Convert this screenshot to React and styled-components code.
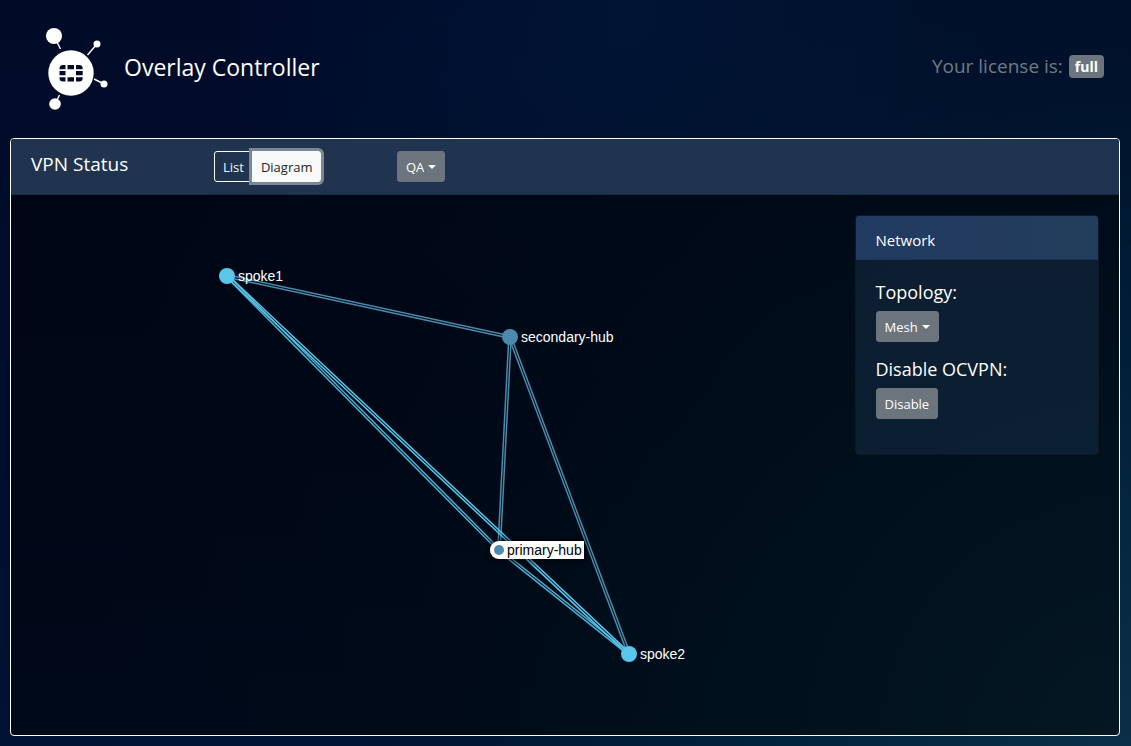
import React, { useState } from "react";
import styled, { createGlobalStyle } from "styled-components";

const GlobalStyle = createGlobalStyle`
  *, *::before, *::after { box-sizing: border-box; }
  body {
    margin: 0;
    color: #fff;
    font-family: "Segoe UI", "Open Sans", "Noto Sans", sans-serif;
    font-size: 15px;
    line-height: 24px;
    background: #000b26;
  }
`;

const Page = styled.div`
  min-height: 100vh;
  display: flex;
  flex-direction: column;
  padding: 0 11px 10px 10px;
  background:
    radial-gradient(circle at 100% 100%, rgba(14, 52, 76, 0.85) 0%, rgba(0, 40, 60, 0.7) 28%, rgba(0, 28, 48, 0.35) 50%, rgba(0, 30, 50, 0) 80%),
    radial-gradient(ellipse at 55% 0%, rgba(0, 20, 56, 0.8) 0%, rgba(0, 20, 56, 0) 45%),
    linear-gradient(180deg, #000b28 0%, #000e2e 60%, #001334 100%);
`;

const Header = styled.header`
  display: flex;
  align-items: center;
  height: 138px;
  padding: 0 16px 0 30px;
`;

const Logo = styled.svg`
  width: 75px;
  height: 92px;
  flex: none;
  margin: 0 9px 2px 0;
`;

const Brand = styled.h1`
  flex: 1;
  margin: 0 0 4px;
  font-size: 23px;
  font-weight: 400;
  line-height: 32px;
`;

const License = styled.p`
  display: flex;
  align-items: center;
  gap: 6px;
  margin: 0 0 6px;
  font-size: 19px;
  color: #727b84;
`;

const Badge = styled.span`
  padding: 0 6px;
  border-radius: 4px;
  background: #6c757d;
  color: #fff;
  font-size: 14px;
  font-weight: 700;
  line-height: 23px;
`;

const Card = styled.main`
  flex: 1;
  display: flex;
  flex-direction: column;
  border: 1px solid #fff;
  border-radius: 4px;
  background: rgba(0, 0, 0, 0.5);
  overflow: hidden;
`;

const Row = styled.div`
  display: grid;
  grid-template-columns: repeat(12, minmax(0, 1fr));
  column-gap: 30px;
  padding: 0 20px;
`;

const Toolbar = styled(Row)`
  height: 56px;
  align-items: center;
  background: #20334f;
  border-bottom: 1px solid #1a2a42;
`;

const Column = styled.div`
  grid-column: span ${(p) => p.$span};
`;

const Title = styled.h2`
  margin: 0 0 6px;
  font-size: 19px;
  font-weight: 400;
  line-height: 24px;
`;

const ButtonGroup = styled.div`
  display: flex;
`;

const ToggleButton = styled.button`
  height: 31px;
  padding: 0 8px;
  border: 1px solid #f8f9fa;
  border-radius: ${(p) => (p.$last ? "0 3px 3px 0" : "3px 0 0 3px")};
  margin-left: ${(p) => (p.$last ? "-1px" : "0")};
  background: ${(p) => (p.$active ? "#f8f9fa" : "transparent")};
  color: ${(p) => (p.$active ? "#212529" : "#f8f9fa")};
  box-shadow: ${(p) => (p.$active ? "0 0 0 3px #7c8794" : "none")};
  font: inherit;
  font-size: 13px;
`;

const Button = styled.button`
  height: 31px;
  padding: 0 8px;
  border: 1px solid #6c757d;
  border-radius: 3px;
  background: #6c757d;
  color: #fff;
  font: inherit;
  font-size: 13px;
`;

const SelectBox = styled.span`
  display: inline-grid;
  align-items: center;
  vertical-align: top;

  & > * { grid-area: 1 / 1; }
`;

const Select = styled(Button).attrs({ as: "select" })`
  appearance: none;
  field-sizing: content;
  padding-right: 20px;
`;

const Caret = styled.span`
  justify-self: end;
  margin-right: 9px;
  border: 4px solid transparent;
  border-top-color: #fff;
  border-bottom: 0;
  pointer-events: none;
`;

const Body = styled(Row)`
  flex: 1;
`;

const Diagram = styled.svg`
  display: block;
  width: 100%;
  height: 100%;
  min-height: 520px;
  overflow: visible;
  font-family: "Liberation Sans", Arial, sans-serif;
  font-size: 14px;
`;

const Panel = styled.section`
  margin: 20px 0;
  padding-bottom: 35px;
  border: 1px solid #0a1a2b;
  border-radius: 4px;
  background: rgba(32, 58, 86, 0.38);
  overflow: hidden;
`;

const PanelHeader = styled.h3`
  margin: 0;
  padding: 12px 20px 6px;
  background: linear-gradient(90deg, #213a61, #233d5c);
  border-bottom: 1px solid #1e3555;
  font-size: 15px;
  font-weight: 400;
  line-height: 25px;
`;

const Field = styled.div`
  padding: 20px 20px 0;

  & + & { padding-top: 15px; }
`;

const Label = styled.label`
  display: block;
  margin-bottom: 7px;
  font-size: 18px;
  line-height: 24px;
`;

const BRIGHT = "#58c7ea";
const MUTED = "#4a8bad";
const MIDDLE = "#50aed2";

const nodes = {
  spoke1: { x: 216, y: 81, color: BRIGHT },
  "secondary-hub": { x: 499, y: 142, color: MUTED },
  "primary-hub": { x: 488, y: 355, color: MUTED, hovered: true },
  spoke2: { x: 618, y: 459, color: BRIGHT },
};

const edges = [
  { from: "spoke1", to: "secondary-hub", color: MUTED },
  { from: "secondary-hub", to: "primary-hub", color: MUTED },
  { from: "secondary-hub", to: "spoke2", color: MUTED },
  { from: "spoke1", to: "primary-hub", color: MIDDLE },
  { from: "primary-hub", to: "spoke2", color: MIDDLE },
  { from: "spoke1", to: "spoke2", color: BRIGHT },
];

function Edge({ from, to, color }) {
  const a = nodes[from];
  const b = nodes[to];
  const length = Math.hypot(b.x - a.x, b.y - a.y);
  const nx = (a.y - b.y) / length;
  const ny = (b.x - a.x) / length;
  return [-1.2, 1.2].map((d) => (
    <line
      key={d}
      x1={a.x + nx * d}
      y1={a.y + ny * d}
      x2={b.x + nx * d}
      y2={b.y + ny * d}
      stroke={color}
      strokeWidth="1.5"
    />
  ));
}

function Node({ name }) {
  const { x, y, color, hovered } = nodes[name];
  if (hovered) {
    return (
      <g>
        <path
          d={`M${x + 85} ${y - 9}H${x}a9 9 0 0 0 0 18h${85}z`}
          fill="#fff"
          filter="url(#node-shadow)"
        />
        <circle cx={x} cy={y} r="5" fill={color} />
        <text x={x + 8} y={y + 5} fill="#000">{name}</text>
      </g>
    );
  }
  return (
    <g>
      <circle cx={x} cy={y} r="8" fill={color} />
      <text x={x + 11} y={y + 5} fill="#fff">{name}</text>
    </g>
  );
}

function LogoMark() {
  return (
    <Logo viewBox="0 0 75 92" fill="#fff" stroke="#fff" strokeWidth="1.4" aria-hidden="true">
      <path d="M14 14 20.500 27M57 22 47.500 33M54 57 64 62M15 82 19.500 73" fill="none" />
      <g stroke="none">
        <circle cx="14" cy="14" r="8" />
        <circle cx="57" cy="22" r="3.5" />
        <circle cx="64" cy="62" r="3.5" />
        <circle cx="15" cy="82" r="5.800" />
        <circle cx="31" cy="51" r="22.700" />
      </g>
      <g fill="#000c29" stroke="none">
        <path d="M23 43h2.500v4.200h-6v-.7a3.500 3.500 0 0 1 3.500-3.500z" />
        <path d="M27.500 43h6.500v4.200h-6.500zM27.500 55.300h6.500v4.200h-6.500zM19.500 49h6v4.300h-6zM36 49h6.700v4.300h-6.700z" />
        <path d="M36 43h3.200a3.500 3.500 0 0 1 3.500 3.500v.7h-6.700zM36 55.300h6.700v.7a3.500 3.500 0 0 1-3.500 3.500h-3.200zM19.500 55.300h6v4.200h-2.500a3.500 3.500 0 0 1-3.500-3.500z" />
      </g>
    </Logo>
  );
}

function Dropdown({ id, label, value }) {
  return (
    <SelectBox>
      <Select id={id} aria-label={label} defaultValue={value}>
        <option>{value}</option>
      </Select>
      <Caret />
    </SelectBox>
  );
}

export default function App() {
  const [view, setView] = useState("Diagram");
  return (
    <Page>
      <GlobalStyle />
      <Header>
        <LogoMark />
        <Brand>Overlay Controller</Brand>
        <License>
          Your license is: <Badge>full</Badge>
        </License>
      </Header>
      <Card>
        <Toolbar>
          <Column $span={2}>
            <Title>VPN Status</Title>
          </Column>
          <Column $span={2}>
            <ButtonGroup role="group">
              {["List", "Diagram"].map((name, i) => (
                <ToggleButton
                  key={name}
                  type="button"
                  $last={i === 1}
                  $active={view === name}
                  aria-pressed={view === name}
                  onClick={() => setView(name)}
                >
                  {name}
                </ToggleButton>
              ))}
            </ButtonGroup>
          </Column>
          <Column $span={2}>
            <Dropdown id="overlay" label="Overlay" value="QA" />
          </Column>
        </Toolbar>
        <Body>
          <Column $span={9}>
            <Diagram>
              <defs>
                <filter id="node-shadow" x="-20%" y="-60%" width="140%" height="220%">
                  <feDropShadow dx="0" dy="0" stdDeviation="4" floodColor="#000" />
                </filter>
              </defs>
              <g transform="translate(-20 0)">
                {edges.map((edge) => (
                  <Edge key={edge.from + edge.to} {...edge} />
                ))}
                {Object.keys(nodes).map((name) => (
                  <Node key={name} name={name} />
                ))}
              </g>
            </Diagram>
          </Column>
          <Column $span={3}>
            <Panel>
              <PanelHeader>Network</PanelHeader>
              <Field>
                <Label htmlFor="topology">Topology:</Label>
                <Dropdown id="topology" value="Mesh" />
              </Field>
              <Field>
                <Label htmlFor="disable">Disable OCVPN:</Label>
                <Button id="disable" type="button">Disable</Button>
              </Field>
            </Panel>
          </Column>
        </Body>
      </Card>
    </Page>
  );
}
